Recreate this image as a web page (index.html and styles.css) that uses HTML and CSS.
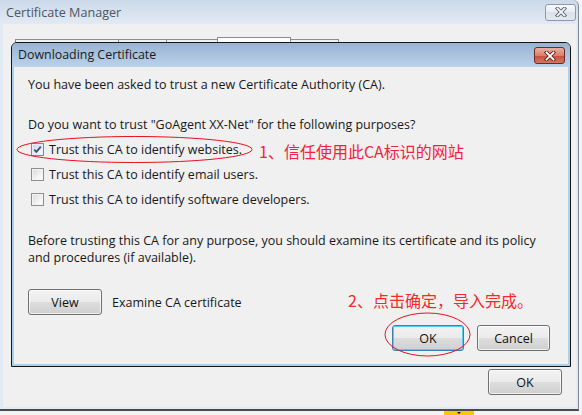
FILE: index.html
```html
<!DOCTYPE html>
<html>
<head>
<meta charset="utf-8">
<title>Certificate Manager</title>
<link rel="stylesheet" href="styles.css">
</head>
<body>
<div class="screen">
  <div class="mgr">
    <div class="mgr-title">
      <span class="mgr-title-text">Certificate Manager</span>
      <span class="close close-inactive">
        <svg width="12" height="10" viewBox="0 0 12 10"><path d="M2.5 1.5 L9.5 8.5 M9.5 1.5 L2.5 8.5" stroke="#59606b" stroke-width="3.6" stroke-linecap="square"/><path d="M2.5 1.5 L9.5 8.5 M9.5 1.5 L2.5 8.5" stroke="#f4f6f9" stroke-width="1.8" stroke-linecap="square"/></svg>
      </span>
    </div>
    <div class="mgr-body">
      <div class="tabs">
        <span class="tab tab-a"></span>
        <span class="tab tab-b"></span>
        <span class="tab tab-c"></span>
        <span class="tab tab-sel"></span>
        <span class="tab tab-d"></span>
      </div>
      <div class="mgr-foot">
        <span class="btn btn-mgr-ok">OK</span>
      </div>
    </div>
  </div>
  <div class="taskbar"><span class="tray"></span></div>

  <div class="dlg">
    <div class="dlg-title">
      <span class="dlg-title-text">Downloading Certificate</span>
      <span class="close close-red">
        <svg width="12" height="10" viewBox="0 0 12 10"><path d="M2.5 1.5 L9.5 8.5 M9.5 1.5 L2.5 8.5" stroke="#5a2219" stroke-width="3.6" stroke-linecap="square"/><path d="M2.5 1.5 L9.5 8.5 M9.5 1.5 L2.5 8.5" stroke="#ffffff" stroke-width="1.8" stroke-linecap="square"/></svg>
      </span>
    </div>
    <div class="dlg-body">
      <p class="line line-first">You have been asked to trust a new Certificate Authority (CA).</p>
      <p class="line line-second">Do you want to trust "GoAgent XX-Net" for the following purposes?</p>
      <ul class="checks">
        <li class="check-row">
          <span class="cb cb-on"><svg width="11" height="11" viewBox="0 0 11 11"><path d="M2.2 5.6 L4.4 7.9 L8.8 2.6" fill="none" stroke="#3d4f80" stroke-width="1.8"/></svg></span>
          <span class="cb-label">Trust this CA to identify websites.</span>
        </li>
        <li class="check-row">
          <span class="cb"></span>
          <span class="cb-label">Trust this CA to identify email users.</span>
        </li>
        <li class="check-row">
          <span class="cb"></span>
          <span class="cb-label">Trust this CA to identify software developers.</span>
        </li>
      </ul>
      <p class="para">Before trusting this CA for any purpose, you should examine its certificate and its policy<br>and procedures (if available).</p>
      <div class="view-row">
        <span class="btn btn-view">View</span>
        <span class="view-label">Examine CA certificate</span>
      </div>
      <div class="actions">
        <span class="btn btn-ok">OK</span>
        <span class="btn btn-cancel">Cancel</span>
      </div>
    </div>
  </div>

  <div class="annot">
    <span class="note note-one">1、信任使用此CA标识的网站</span>
    <span class="note note-two">2、点击确定，导入完成。</span>
    <svg class="rings" width="582" height="415" viewBox="0 0 582 415">
      <ellipse cx="134.5" cy="149.5" rx="117.5" ry="13" fill="none" stroke="#e8101e" stroke-width="1"/>
      <ellipse cx="427.5" cy="334.5" rx="42.5" ry="21.5" fill="none" stroke="#e8101e" stroke-width="1"/>
    </svg>
  </div>
</div>
</body>
</html>
```

FILE: styles.css
```css
html, body {
  margin: 0;
  padding: 0;
}

body {
  font-family: "Open Sans", "Noto Sans CJK SC", sans-serif;
  font-size: 12.5px;
  color: #181818;
  background: #f4f4f4;
}

.screen {
  position: relative;
  width: 582px;
  height: 415px;
  overflow: hidden;
}

/* ---------- Certificate Manager (background window) ---------- */
.mgr {
  width: 579px;
  height: 411px;
  box-sizing: border-box;
  display: flex;
  flex-direction: column;
  background: linear-gradient(#cbd9e9, #e2eaf4 24px, #e2eaf4);
  border-right: 1px solid #7e8794;
  border-bottom: 2px solid #4a4a4a;
  border-radius: 0 6px 0 0;
}

.mgr-title {
  flex: none;
  height: 24px;
  display: flex;
  align-items: center;
  justify-content: space-between;
  padding: 0 2px 0 6px;
}

.mgr-title-text {
  color: #4c5561;
  font-size: 12.6px;
}

.close {
  box-sizing: border-box;
  width: 31px;
  height: 17px;
  border-radius: 3px;
  display: flex;
  align-items: center;
  justify-content: center;
}

.close-inactive {
  border: 1px solid #8c99ad;
  background: linear-gradient(#f8fafc, #e7ecf3 50%, #d9e1eb 50%, #e4e9f1);
}

.mgr-body {
  flex: 1;
  margin: 0 2px 2px 3px;
  background: #f0f0f0;
  display: flex;
  flex-direction: column;
  justify-content: space-between;
}

.tabs {
  display: flex;
  align-items: flex-end;
  height: 6px;
  margin: 13px 0 0 12px;
}

.tab {
  box-sizing: border-box;
  height: 4px;
  margin-right: -1px;
  border: 1px solid #8a8d96;
  border-bottom: none;
  background: #f0f0f0;
}

.tab-a { width: 104px; }
.tab-b { width: 49px; }
.tab-c { width: 52px; }
.tab-sel { width: 74px; height: 6px; background: #ffffff; }
.tab-d { width: 49px; }

.mgr-foot {
  display: flex;
  justify-content: flex-end;
  padding: 0 14px 12px 0;
}

.taskbar {
  height: 4px;
  display: flex;
  padding-left: 444px;
}

.tray {
  position: relative;
  width: 30px;
  height: 4px;
  background: #fdc600;
}

.tray::after {
  content: "";
  position: absolute;
  left: 13px;
  top: 1px;
  border-left: 2px solid transparent;
  border-right: 2px solid transparent;
  border-top: 2px solid #111;
}

/* ---------- Buttons ---------- */
.btn {
  box-sizing: border-box;
  height: 26px;
  border: 1px solid #707070;
  border-radius: 3px;
  background: linear-gradient(#f2f2f2 0%, #ebebeb 48%, #dddddd 52%, #cfcfcf 100%);
  box-shadow: inset 0 0 0 1px rgba(255, 255, 255, 0.7);
  display: inline-flex;
  align-items: center;
  justify-content: center;
  color: #111;
  font-size: 12.5px;
}

.btn-mgr-ok { width: 74px; }
.btn-view { width: 74px; }
.btn-ok {
  width: 72px;
  border-color: #3c7fb1;
  box-shadow: inset 0 0 0 1px #55cdf3;
}
.btn-cancel { width: 73px; }

/* ---------- Downloading Certificate dialog ---------- */
.dlg {
  position: absolute;
  left: 11px;
  top: 42px;
  width: 560px;
  height: 325px;
  box-sizing: border-box;
  border: 1px solid #151515;
  border-radius: 6px 6px 0 0;
  background: #add0ea;
  display: flex;
  flex-direction: column;
}

.dlg-title {
  flex: none;
  height: 24px;
  display: flex;
  justify-content: space-between;
  align-items: flex-start;
  padding: 0 5px 0 6px;
  border-radius: 5px 5px 0 0;
  background: linear-gradient(#98b3d2, #bbd2ea);
}

.dlg-title-text {
  line-height: 24px;
  font-size: 12.4px;
  color: #1a1a1a;
}

.close-red {
  margin-top: 4px;
  border: 1px solid #6e2a20;
  background: linear-gradient(#eab1a3, #d9806c 50%, #c4503b 50%, #d37562);
}

.dlg-body {
  flex: 1;
  margin: 0 2px 2px 2px;
  background: #f0f0f0;
  padding: 0 18px 0 14px;
  display: flex;
  flex-direction: column;
}

.line {
  margin: 0;
  line-height: 16px;
}

.line-first { margin-top: 10px; }
.line-second { margin-top: 24px; }

.checks {
  list-style: none;
  margin: 4px 0 0 0;
  padding: 0;
}

.check-row {
  height: 25px;
  display: flex;
  align-items: center;
}

.cb {
  box-sizing: border-box;
  width: 13px;
  height: 13px;
  margin: 0 5px 0 3px;
  border: 1px solid #8e8f8f;
  background: linear-gradient(135deg, #d8d8d8, #f7f7f7 70%, #ffffff);
  box-shadow: inset 0 0 0 1px #f4f4f4;
  display: flex;
  align-items: center;
  justify-content: center;
}

.cb-on {
  border-color: #7a8aa6;
  background: linear-gradient(135deg, #c9d6e6, #eef3f9 70%, #ffffff);
  box-shadow: inset 0 0 0 1px #e6edf6;
}

.para {
  margin: 20px 0 0 0;
  line-height: 17px;
}

.view-row {
  display: flex;
  align-items: center;
  margin-top: 23px;
}

.view-label {
  margin-left: 10px;
}

.actions {
  display: flex;
  justify-content: flex-end;
  gap: 13px;
  margin-top: 10px;
}

/* ---------- Red annotations ---------- */
.annot {
  position: absolute;
  left: 0;
  top: 0;
  width: 582px;
  height: 415px;
  pointer-events: none;
}

.rings {
  position: absolute;
  left: 0;
  top: 0;
}

.note {
  position: absolute;
  font-family: "Noto Sans CJK SC", sans-serif;
  font-size: 16px;
  line-height: 20px;
  white-space: nowrap;
}

.note-one {
  left: 259px;
  top: 141px;
  color: #f5203e;
}

.note-two {
  left: 348px;
  top: 290px;
  color: #f22a2a;
}
```
